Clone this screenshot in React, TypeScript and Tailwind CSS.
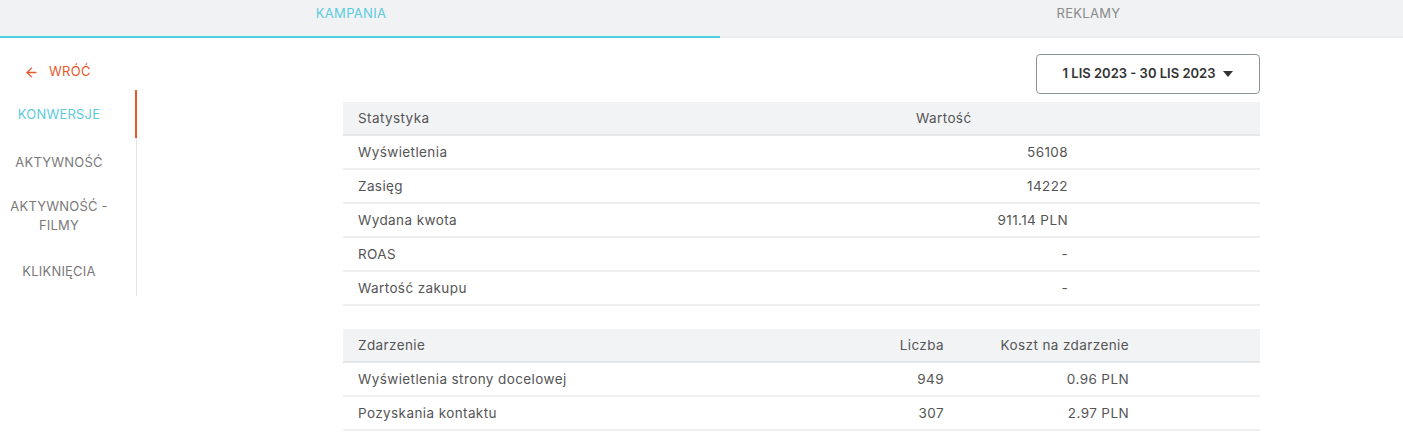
import React from "react";

const font = { fontFamily: "Inter, 'Noto Sans', sans-serif" };

function NavItem({ label, active, h }: { label: React.ReactNode; active?: boolean; h: string }) {
  return (
    <div className={`flex ${h} items-center`}>
      <div
        className={`w-[118px] text-center text-[13px] leading-[19px] uppercase tracking-[0.2px] ${active ? "text-[#5ccbdc]" : "text-[#7a7a7a]"}`}
      >
        {label}
      </div>
      <div className="ml-auto flex h-full w-[2px] justify-center">
        {active ? <div className="h-full w-[2px] bg-[#e8582b]" /> : <div className="h-full w-px bg-[#e4e4e4]" />}
      </div>
    </div>
  );
}

export default function App() {
  const stats: [string, string][] = [
    ["Wyświetlenia", "56108"],
    ["Zasięg", "14222"],
    ["Wydana kwota", "911.14 PLN"],
    ["ROAS", "-"],
    ["Wartość zakupu", "-"],
  ];
  const events: [string, string, string][] = [
    ["Wyświetlenia strony docelowej", "949", "0.96 PLN"],
    ["Pozyskania kontaktu", "307", "2.97 PLN"],
  ];
  return (
    <div className="min-h-[440px] w-[1403px] bg-white text-[#555]" style={font}>
      <div className="flex h-[38px] bg-[#f1f2f4]">
        <div className="flex w-[720px] justify-center border-b-2 border-[#4fd1de] pr-[18px] pt-[4px] text-[13px] uppercase tracking-[0.3px] text-[#5ccbdc]">
          Kampania
        </div>
        <div className="flex flex-1 justify-center border-b-2 border-[#eaebed] pl-[54px] pt-[4px] text-[13px] uppercase tracking-[0.3px] text-[#8a8a8a]">
          Reklamy
        </div>
      </div>
      <div className="flex">
        <div className="w-[137px] pt-[24px]">
          <div className="flex h-[20px] items-center pl-[24px] text-[13px] uppercase tracking-[0.3px] text-[#e8582b]">
            <svg width="15" height="15" viewBox="0 0 24 24" fill="none" stroke="currentColor" strokeWidth="2.2" strokeLinecap="round" strokeLinejoin="round">
              <path d="M19 12H5" />
              <path d="M12 19l-7-7 7-7" />
            </svg>
            <span className="ml-[10px]">Wróć</span>
          </div>
          <div className="mt-[8px]">
            <NavItem label="Konwersje" active h="h-[48px]" />
            <NavItem label="Aktywność" h="h-[48px]" />
            <NavItem label={<>Aktywność -<br />Filmy</>} h="h-[60px]" />
            <NavItem label="Kliknięcia" h="h-[50px]" />
          </div>
        </div>
        <div className="ml-[206px] w-[917px] pt-[16px]">
          <div className="flex justify-end">
            <button className="flex h-[40px] w-[224px] items-center justify-center gap-[8px] rounded-[4px] border border-[#8d939b] text-[13px] font-semibold text-[#333]">
              <span>1 LIS 2023 - 30 LIS 2023</span>
              <svg width="10" height="6" viewBox="0 0 10 6"><path d="M0 0h10L5 6z" fill="#333" /></svg>
            </button>
          </div>
          <div className="mt-[8px] text-[13.5px] tracking-[0.4px]">
            <div className="flex h-[34px] items-center border-b-2 border-[#e6e7e9] bg-[#f2f3f5] text-[#555]">
              <div className="w-[558px] pl-[15px]">Statystyka</div>
              <div className="w-[182px] pl-[15px]">Wartość</div>
            </div>
            {stats.map(([k, v]) => (
              <div key={k} className="flex h-[34px] items-center border-b-2 border-[#eeeff1]">
                <div className="w-[558px] pl-[15px]">{k}</div>
                <div className="w-[182px] pr-[15px] text-right">{v}</div>
              </div>
            ))}
          </div>
          <div className="mt-[23px] text-[13.5px] tracking-[0.4px]">
            <div className="flex h-[34px] items-center border-b-2 border-[#e6e7e9] bg-[#f2f3f5]">
              <div className="w-[530px] pl-[15px]">Zdarzenie</div>
              <div className="w-[86px] pr-[15px] text-right">Liczba</div>
              <div className="w-[185px] pr-[15px] text-right">Koszt na zdarzenie</div>
            </div>
            {events.map(([k, n, c]) => (
              <div key={k} className="flex h-[34px] items-center border-b-2 border-[#eeeff1]">
                <div className="w-[530px] pl-[15px]">{k}</div>
                <div className="w-[86px] pr-[15px] text-right">{n}</div>
                <div className="w-[185px] pr-[15px] text-right">{c}</div>
              </div>
            ))}
          </div>
        </div>
      </div>
    </div>
  );
}
